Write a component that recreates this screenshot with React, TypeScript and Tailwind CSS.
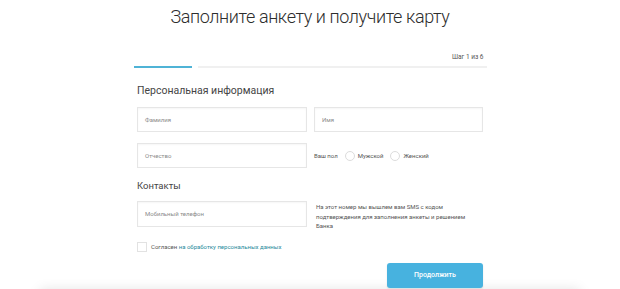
import React from "react";

function Field({ label, className = "" }: { label: string; className?: string }) {
  return (
    <div
      className={`flex items-center border border-[#e6e6e6] bg-white pl-[7px] shadow-[inset_0_1px_2px_rgba(0,0,0,0.04)] ${className}`}
    >
      <span className="text-[6px] leading-[8px] text-[#8a8a8a]">{label}</span>
    </div>
  );
}

function Radio({ label }: { label: string }) {
  return (
    <div className="flex items-center gap-[3px]">
      <span className="box-border h-[10px] w-[10px] rounded-full border border-[#dcdcdc] bg-white" />
      <span className="text-[6px] leading-[8px] text-[#555]">{label}</span>
    </div>
  );
}

export default function App() {
  return (
    <div className="relative h-[289px] w-[620px] overflow-hidden bg-white font-['Roboto',sans-serif]">
      <h1 className="pt-[5px] text-center text-[18px] font-light leading-[24px] tracking-[-0.4px] text-[#2d2d2d]">
        Заполните анкету и получите карту
      </h1>

      <div className="mx-auto mt-[24px] w-[353px]">
        <div className="pr-[3px] text-right text-[6.5px] leading-[9px] text-[#555]">Шаг 1 из 6</div>
        <div className="mt-[4px] flex items-center gap-[6px]">
          <div className="h-[2px] w-[58px] bg-[#4fb3d6]" />
          <div className="h-[2px] flex-1 bg-[#f0f0f0]" />
        </div>
      </div>

      <div className="mx-auto w-[346px]">
        <div className="mt-[17px] text-[10.5px] leading-[12px] text-[#444]">Персональная информация</div>

        <div className="mt-[10px] flex gap-[7px]">
          <Field label="Фамилия" className="h-[25px] w-[170px]" />
          <Field label="Имя" className="h-[25px] flex-1" />
        </div>

        <div className="mt-[11px] flex items-center gap-[7px]">
          <Field label="Отчество" className="h-[25px] w-[170px]" />
          <div className="flex items-center gap-[7px]">
            <span className="text-[6px] leading-[8px] text-[#555]">Ваш пол</span>
            <Radio label="Мужской" />
            <Radio label="Женский" />
          </div>
        </div>

        <div className="mt-[12px] text-[9.5px] leading-[12px] text-[#444]">Контакты</div>

        <div className="mt-[9px] flex items-start gap-[9px]">
          <Field label="Мобильный телефон" className="h-[26px] w-[170px]" />
          <p className="pt-[1px] text-[6px] leading-[9.5px] text-[#555]">
            На этот номер мы вышлем вам SMS с кодом
            <br />
            подтверждения для заполнения анкеты и решением
            <br />
            Банка
          </p>
        </div>

        <div className="mt-[11px] flex items-center gap-[4px]">
          <span className="box-border h-[10px] w-[10px] border border-[#e2e2e2] bg-white" />
          <span className="text-[6px] leading-[8px] text-[#555]">
            Согласен <span className="text-[#1f8b9c]">на обработку персональных данных</span>
          </span>
        </div>

        <div className="mt-[11px] flex justify-end">
          <button className="h-[25px] w-[96px] rounded-[3px] bg-[#47b2df] text-[7px] font-medium text-white shadow-[0_1px_2px_rgba(0,0,0,0.1)]">
            Продолжить
          </button>
        </div>
      </div>

      <div className="mx-[40px] mt-[6px] h-[40px] bg-white shadow-[0_-4px_12px_rgba(0,0,0,0.12)]" />
    </div>
  );
}
